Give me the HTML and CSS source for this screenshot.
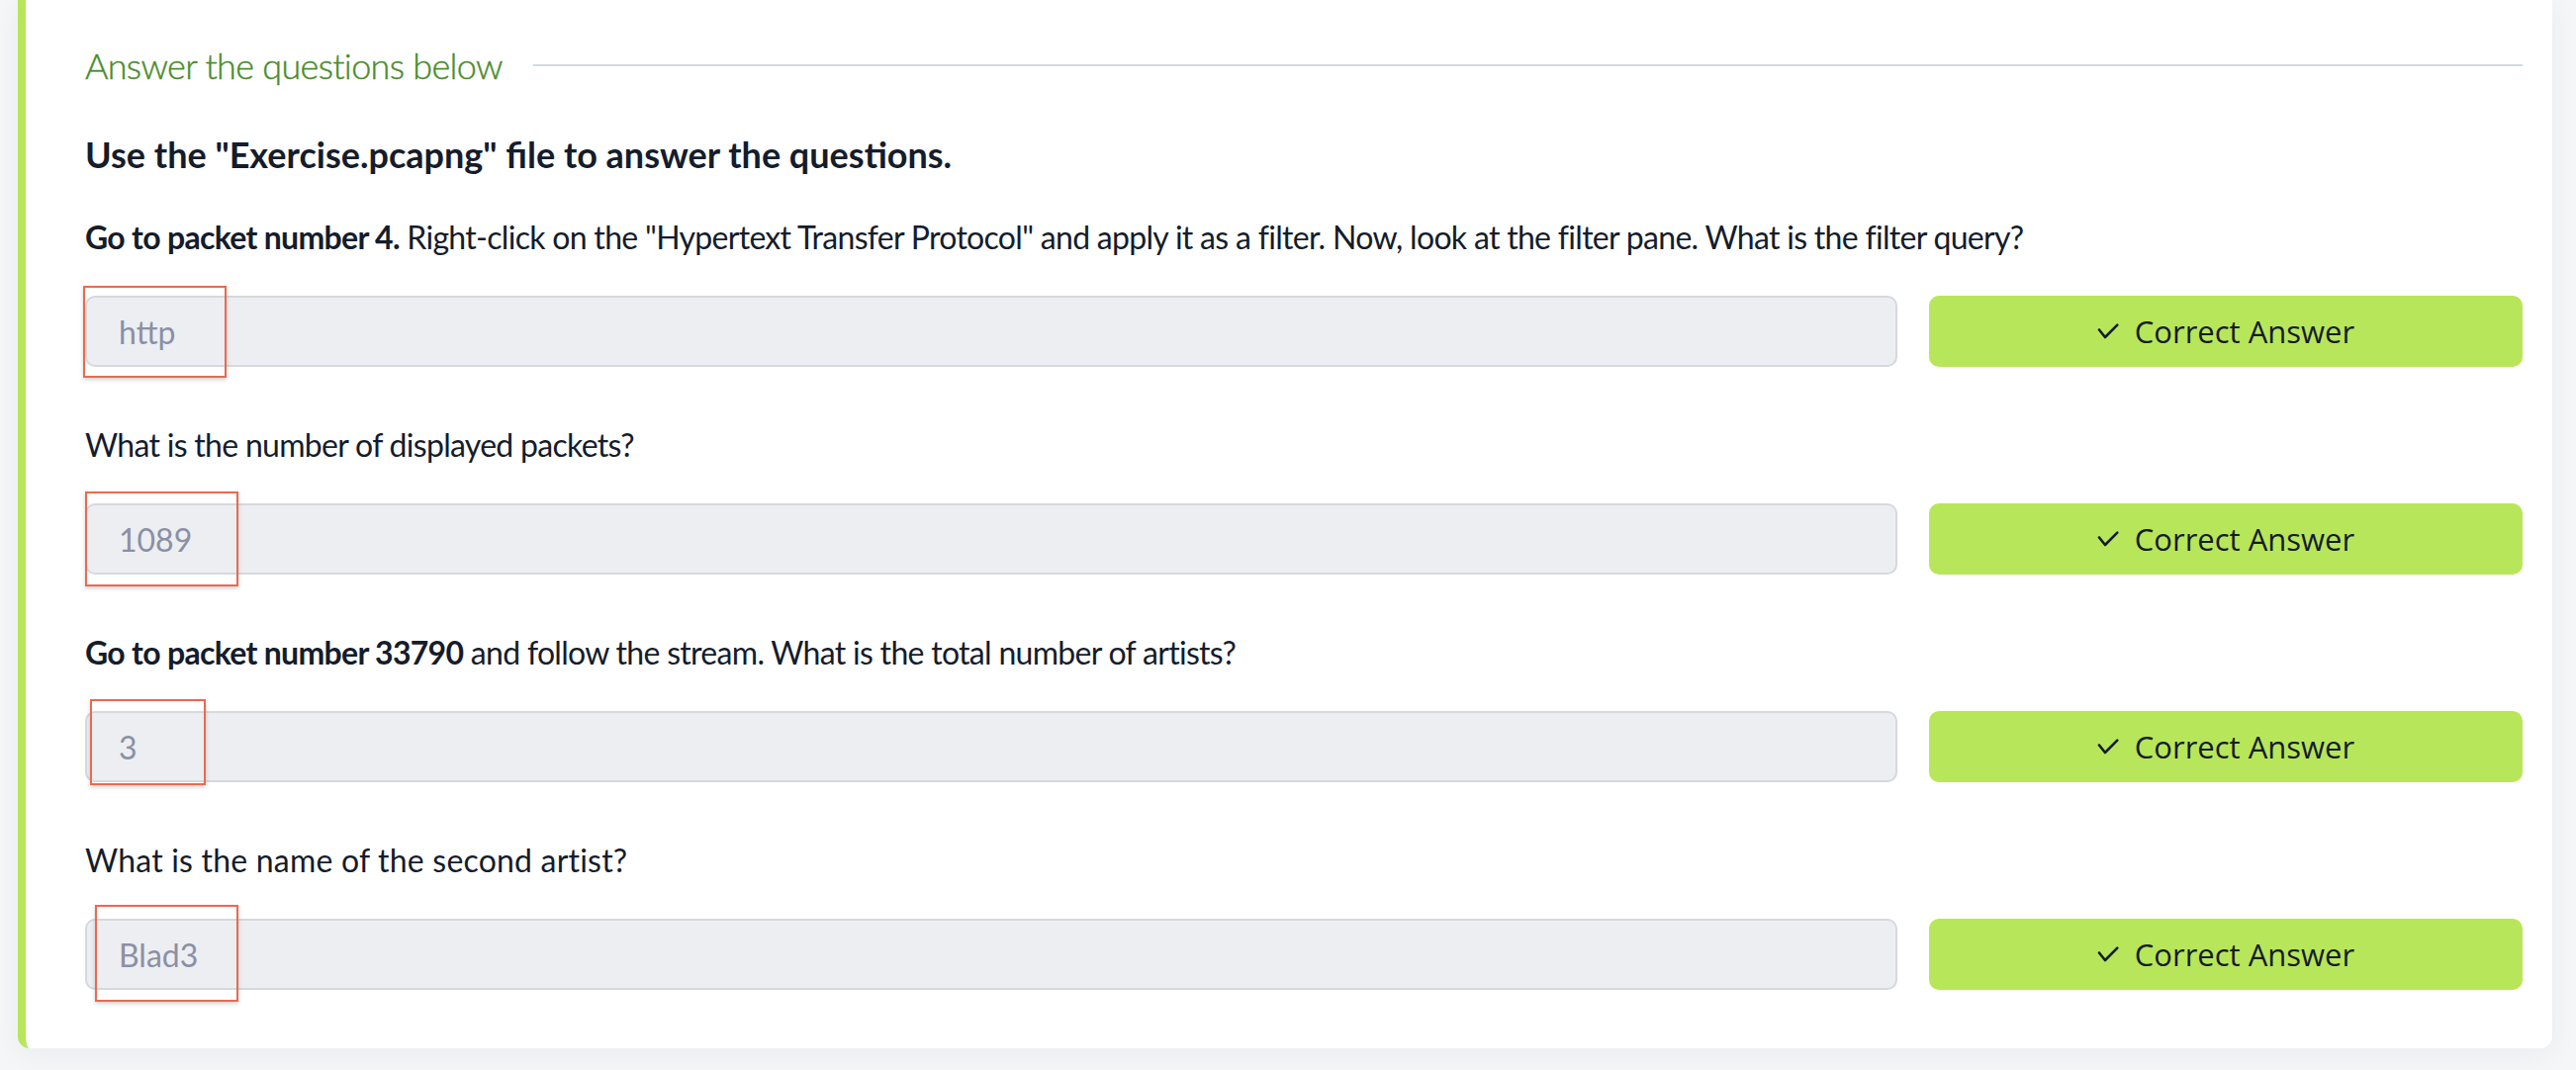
FILE: index.html
```html
<!DOCTYPE html>
<html lang="en">
<head>
<meta charset="utf-8">
<title>Answer the questions below</title>
<link rel="stylesheet" href="styles.css">
</head>
<body>
<div class="page">
  <section class="card">
    <div class="card-head">
      <h2 class="head-title">Answer the questions below</h2>
      <div class="head-rule"></div>
    </div>
    <p class="intro">Use the "Exercise.pcapng" file to answer the questions.</p>

    <div class="question">
      <p class="q-text"><strong>Go to packet number 4.</strong> Right-click on the "Hypertext Transfer Protocol" and apply it as a filter. Now, look at the filter pane. What is the filter query?</p>
      <div class="answer-row">
        <div class="answer-field">http</div>
        <button class="answer-btn"><svg class="check" viewBox="0 0 22 16"><polyline points="2,6.5 8,14 20.3,1.6"/></svg><span>Correct Answer</span></button>
        <div class="mark mark-1"></div>
      </div>
    </div>

    <div class="question">
      <p class="q-text">What is the number of displayed packets?</p>
      <div class="answer-row">
        <div class="answer-field">1089</div>
        <button class="answer-btn"><svg class="check" viewBox="0 0 22 16"><polyline points="2,6.5 8,14 20.3,1.6"/></svg><span>Correct Answer</span></button>
        <div class="mark mark-2"></div>
      </div>
    </div>

    <div class="question">
      <p class="q-text"><strong>Go to packet number 33790</strong> and follow the stream. What is the total number of artists?</p>
      <div class="answer-row">
        <div class="answer-field">3</div>
        <button class="answer-btn"><svg class="check" viewBox="0 0 22 16"><polyline points="2,6.5 8,14 20.3,1.6"/></svg><span>Correct Answer</span></button>
        <div class="mark mark-3"></div>
      </div>
    </div>

    <div class="question">
      <p class="q-text q-wide">What is the name of the second artist?</p>
      <div class="answer-row">
        <div class="answer-field">Blad3</div>
        <button class="answer-btn"><svg class="check" viewBox="0 0 22 16"><polyline points="2,6.5 8,14 20.3,1.6"/></svg><span>Correct Answer</span></button>
        <div class="mark mark-4"></div>
      </div>
    </div>
  </section>
</div>
</body>
</html>
```

FILE: styles.css
```css
* { box-sizing: border-box; }

html, body {
  margin: 0;
  padding: 0;
}

body {
  background: #f5f6f8;
  font-family: "Lato", "Noto Sans", sans-serif;
  color: #151c2b;
  width: 2604px;
  height: 1082px;
  overflow: hidden;
}

.page {
  padding: 0 24px 0 18px;
}

.card {
  background: #ffffff;
  border-left: 8px solid #b8e65a;
  border-radius: 0 0 12px 12px;
  padding: 39px 30px 59px 60px;
  box-shadow: 0 6px 30px rgba(20, 30, 50, 0.05);
}

.card-head {
  display: flex;
  align-items: center;
  height: 54px;
}

.head-title {
  margin: 0;
  font-size: 36px;
  line-height: 54px;
  font-weight: 300;
  letter-spacing: -0.7px;
  -webkit-text-stroke: 0.4px #4a8c2a;
  color: #4a8c2a;
  white-space: nowrap;
}

.head-rule {
  flex: 1;
  height: 2px;
  margin-left: 31px;
  background: #d3d7dd;
}

.intro {
  margin: 36px 0 0;
  font-size: 36px;
  line-height: 54px;
  font-weight: 700;
}

.question {
  margin-top: 33px;
}

.question + .question {
  margin-top: 55px;
}

.q-text {
  margin: 0 0 35px;
  font-size: 32px;
  line-height: 48px;
  font-weight: 400;
  letter-spacing: -0.7px;
}

.q-text.q-wide {
  letter-spacing: 0.2px;
}

.q-text strong {
  font-weight: 700;
}

.answer-row {
  position: relative;
  display: flex;
  gap: 32px;
  height: 72px;
}

.answer-field {
  flex: 1;
  display: flex;
  align-items: center;
  padding-left: 32px;
  background: #eceef2;
  border: 2px solid #d5d8de;
  border-radius: 10px;
  font-size: 32px;
  color: #8a90a5;
}

.answer-btn {
  width: 600px;
  display: flex;
  align-items: center;
  justify-content: center;
  gap: 16px;
  border: 0;
  border-radius: 10px;
  background: #b8e65a;
  font-family: "Open Sans", "Noto Sans", sans-serif;
  font-size: 31px;
  color: #151c2b;
  padding: 0;
}

.check {
  width: 22px;
  height: 16px;
  fill: none;
  stroke: #151c2b;
  stroke-width: 2.6;
  stroke-linecap: round;
  stroke-linejoin: round;
}

.mark {
  position: absolute;
  border: 2px solid #e96a50;
  box-shadow: 0 2px 4px rgba(0, 0, 0, 0.18);
  pointer-events: none;
}

.mark-1 { left: -2px; top: -10px; width: 145px; height: 93px; }
.mark-2 { left: 0; top: -12px; width: 155px; height: 96px; }
.mark-3 { left: 5px; top: -12px; width: 117px; height: 87px; }
.mark-4 { left: 10px; top: -14px; width: 145px; height: 98px; }
```
